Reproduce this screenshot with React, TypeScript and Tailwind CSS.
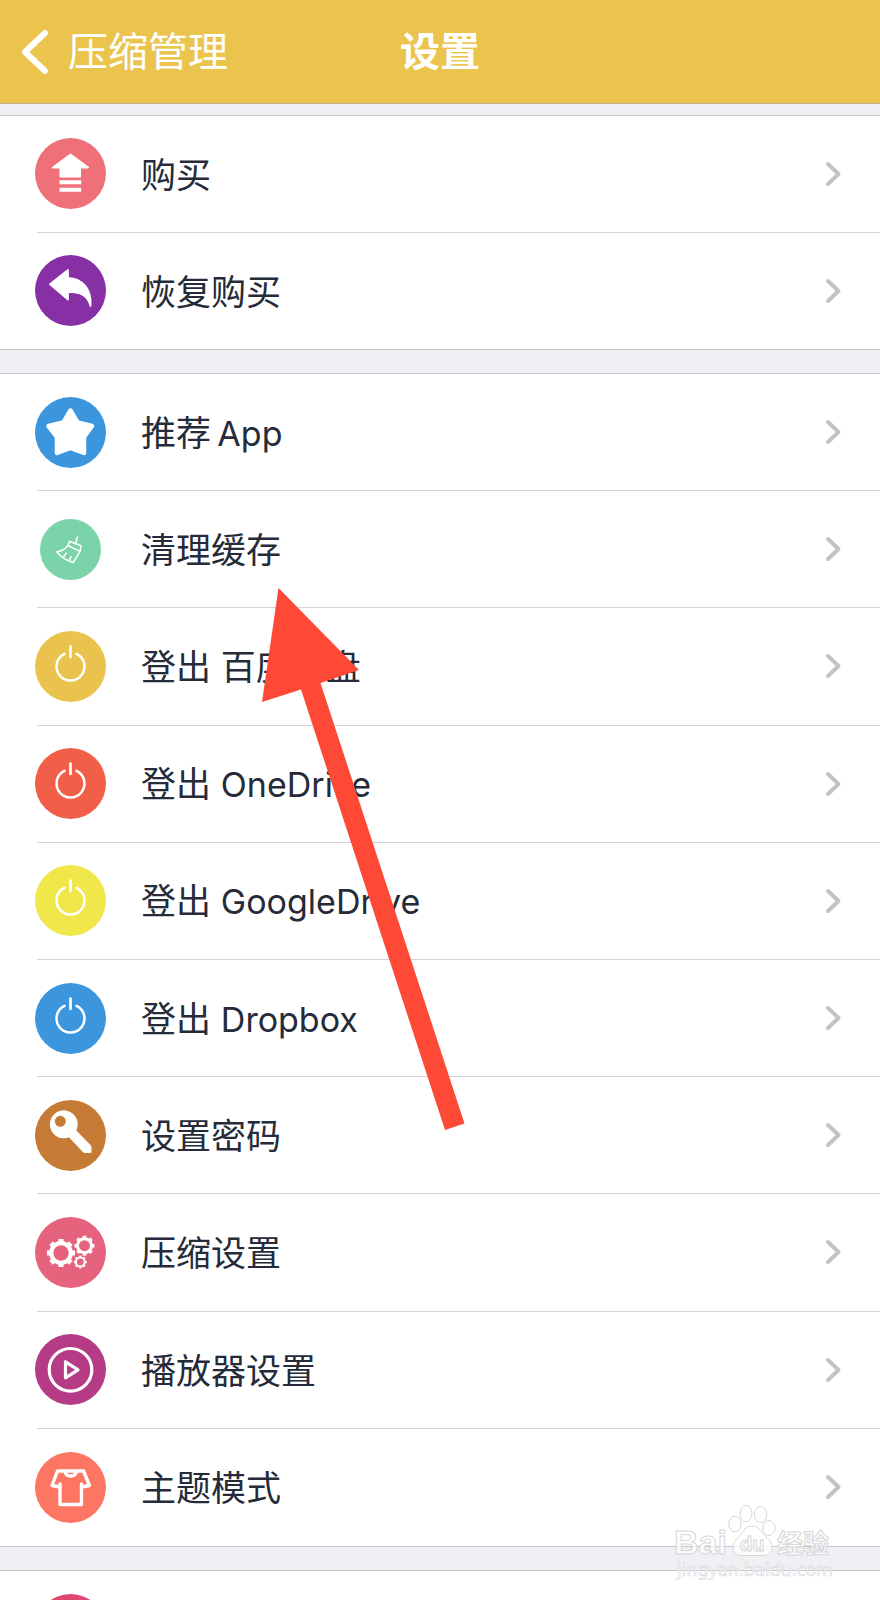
import type { ReactNode } from "react";

type Item = {
  label: string;
  latin?: string;
  color: string;
  icon: ReactNode;
  small?: boolean;
};

const power = (
  <g fill="none" stroke="#fff" strokeLinecap="round">
    <path d="M29.5 22.8A14 14 0 1 0 41.5 22.8" strokeWidth="2.5" />
    <path d="M35.5 15.5V26" strokeWidth="2.7" />
  </g>
);

function Gear({ cx, cy, r, width }: { cx: number; cy: number; r: number; width: number }) {
  return (
    <g fill="none" stroke="#fff">
      <circle cx={cx} cy={cy} r={r} strokeWidth={width} />
      {[0, 45, 90, 135, 180, 225, 270, 315].map((angle) => (
        <path
          key={angle}
          d={`M${cx} ${cy - r}V${cy - r - width}`}
          strokeWidth={width * 1.2}
          transform={`rotate(${angle} ${cx} ${cy})`}
        />
      ))}
    </g>
  );
}

const purchase: Item[] = [
  {
    label: "购买",
    color: "fill-[#f0707a]",
    icon: (
      <g fill="#fff">
        <path
          d="M35.5 16.5L53 29.5H45V38.5H25.5V29.5H18Z"
          stroke="#fff"
          strokeWidth="2"
          strokeLinejoin="round"
        />
        <path d="M24.5 42.3H46.2V46.2H24.5ZM24.5 49.8H46.2V53.7H24.5Z" />
      </g>
    ),
  },
  {
    label: "恢复购买",
    color: "fill-[#8730a5]",
    icon: (
      <path
        d="M15 29.3L33 15V22.8C47 23.5 57 33.5 55.5 51C53 41.5 46 36.5 33 37.3V44.5Z"
        fill="#fff"
        stroke="#fff"
        strokeWidth="1.8"
        strokeLinejoin="round"
      />
    ),
  },
];

const settings: Item[] = [
  {
    label: "推荐\u2009",
    latin: "App",
    color: "fill-[#3c96dd]",
    icon: (
      <path
        d="M35.5 13.5L42.5 25.5L57 29L49 40L49 56L35.5 51L22 56L22 40L13.5 29L28.5 25.5Z"
        fill="#fff"
        stroke="#fff"
        strokeWidth="4.5"
        strokeLinejoin="round"
      />
    ),
  },
  {
    label: "清理缓存",
    color: "fill-[#7bd3a9]",
    small: true,
    icon: (
      <g fill="none" stroke="#fff" strokeWidth="1.5" strokeLinecap="round" strokeLinejoin="round">
        <path d="M42.3 23L40.6 29.8" />
        <path d="M33 31.5L34.5 27.3L46 31.8L45 37.6L38.2 48.5C31.5 46.5 26 43 21.8 38C27 37 30.5 35 33 31.5L45 37.4" />
        <path d="M29 42.3L31.3 39M34.3 46L36.3 42.6" />
      </g>
    ),
  },
  { label: "登出 百度网盘", color: "fill-[#eac34e]", icon: power },
  { label: "登出 ", latin: "OneDrive", color: "fill-[#f25f48]", icon: power },
  { label: "登出 ", latin: "GoogleDrive", color: "fill-[#f0e84a]", icon: power },
  { label: "登出 ", latin: "Dropbox", color: "fill-[#3c96dd]", icon: power },
  {
    label: "设置密码",
    color: "fill-[#c57b35]",
    icon: (
      <path
        fill="#fff"
        fillRule="evenodd"
        d="M28.3 10.3A14 14 0 0 1 41.3 30.5L55.5 45Q56.5 46 56.5 48V52Q56.5 53 55 53H50Q48.8 53 48 52.2L34 37.3A14 14 0 1 1 28.3 10.3ZM25.3 15.8A5.5 5.5 0 1 0 25.3 26.8A5.5 5.5 0 1 0 25.3 15.8Z"
      />
    ),
  },
  {
    label: "压缩设置",
    color: "fill-[#e6637e]",
    icon: (
      <>
        <Gear cx={26} cy={36} r={9.8} width={4.2} />
        <Gear cx={49.5} cy={28.7} r={7} width={3} />
        <Gear cx={45.3} cy={45} r={4.4} width={2} />
      </>
    ),
  },
  {
    label: "播放器设置",
    color: "fill-[#b63b87]",
    icon: (
      <g fill="none" stroke="#fff" strokeWidth="3.2" strokeLinejoin="round">
        <circle cx="35.5" cy="35.8" r="21.3" />
        <path d="M30.5 27.8V43.8L43 35.8Z" />
      </g>
    ),
  },
  {
    label: "主题模式",
    color: "fill-[#fd7563]",
    icon: (
      <g fill="none" stroke="#fff" strokeWidth="3.4" strokeLinecap="round" strokeLinejoin="round">
        <path d="M22.5 19H48.5L54.5 33.5L46.5 35V52.5H25V35L17 33.5Z" />
        <path d="M30 19.5C31 25.5 40.5 25.5 41.5 19.5" />
        <path d="M25 35V32M46.5 35V32" />
      </g>
    ),
  },
];

const more: Item[] = [{ label: "", color: "fill-[#df4670]", icon: null }];

function Section({ items, className }: { items: Item[]; className: string }) {
  return (
    <ul className={`grid auto-rows-fr border-y border-[#c8c8cc] bg-white ${className}`}>
      {items.map((item, i) => (
        <li key={item.label + item.latin} className="flex pl-[37px]">
          <button
            type="button"
            className={`flex flex-1 items-center pr-9 text-left ${
              i < items.length - 1 ? "border-b border-[#d3d3d5]" : ""
            }`}
          >
            <svg viewBox="0 0 71 71" className="-ml-0.5 size-[71px] shrink-0" aria-hidden="true">
              <circle cx="35.5" cy="35.5" r={item.small ? 30.5 : 35.5} className={item.color} />
              {item.icon}
            </svg>
            <span className="ml-[35px] flex-1 pt-0.5 text-[35px] leading-[48px]">
              {item.label}
              {item.latin && <span className="text-[34px]">{item.latin}</span>}
            </span>
            <svg viewBox="0 0 20 28" className="h-7 w-5 shrink-0" aria-hidden="true">
              <path
                d="M4 4L14.5 14L4 24"
                fill="none"
                stroke="#c3c3c4"
                strokeWidth="4"
                strokeLinecap="round"
                strokeLinejoin="round"
              />
            </svg>
          </button>
        </li>
      ))}
    </ul>
  );
}

function Watermark() {
  return (
    <svg
      viewBox="0 0 170 84"
      className="pointer-events-none absolute right-10 bottom-5 h-[84px] w-[170px]"
      fill="#fff"
      fillOpacity="0.75"
      stroke="#d6d6d8"
      strokeWidth="1"
    >
      <g>
        <ellipse cx="65" cy="28" rx="6.2" ry="7.8" />
        <ellipse cx="76" cy="17.5" rx="6" ry="8.2" />
        <ellipse cx="90.5" cy="18.5" rx="6.2" ry="8" />
        <ellipse cx="99" cy="32" rx="6.2" ry="7.5" />
        <path d="M82 30C89 30 91 36 96 41C101 45 103 49 102 53C101 58 97 59.5 92 59.5H72C66 59.5 62 56 63 50C64 44 69 42 72 37C74.5 33 77 30 82 30Z" />
      </g>
      <g fontFamily="'Liberation Sans', sans-serif" fontWeight="700">
        <text x="4" y="58" fontSize="34">
          Bai
        </text>
        <text x="70" y="55" fontSize="20">
          du
        </text>
      </g>
      <text x="107" y="57" fontSize="26" fontWeight="700" fontFamily="'Noto Sans CJK SC', sans-serif">
        经验
      </text>
      <text x="7" y="80" fontSize="18" fontFamily="'Noto Sans', sans-serif" strokeWidth="0.6">
        jingyan.baidu.com
      </text>
    </svg>
  );
}

export default function App() {
  return (
    <main className="relative h-screen overflow-hidden bg-[#efeff4] font-['Inter','Noto_Sans_CJK_SC',sans-serif] text-[#252b38]">
      <header className="grid h-[104px] grid-cols-3 items-center border-b border-[#c3b083] bg-[#ebc44e] text-white">
        <button type="button" className="flex items-center gap-5 pl-5 text-[40px] leading-[56px]">
          <svg viewBox="0 0 28 46" className="h-[46px] w-7" aria-hidden="true">
            <path
              d="M25 4L5 23L25 42"
              fill="none"
              stroke="#fff"
              strokeWidth="6"
              strokeLinecap="round"
              strokeLinejoin="round"
            />
          </svg>
          压缩管理
        </button>
        <h1 className="text-center text-[40px] leading-[56px] font-bold">设置</h1>
      </header>

      <Section items={purchase} className="mt-[11px] min-h-[235px]" />
      <Section items={settings} className="mt-[23px] min-h-[1174px]" />
      <Section items={more} className="mt-[23px] min-h-[119px]" />

      <svg
        viewBox="0 0 204 544"
        className="pointer-events-none absolute top-[588px] left-[262px] h-[544px] w-[204px]"
        aria-hidden="true"
      >
        <path d="M16.5 0L97 82L58.5 95L202.5 535.5L183 542L39 101.5L0 114Z" fill="#fd4936" />
      </svg>
      <Watermark />
    </main>
  );
}
